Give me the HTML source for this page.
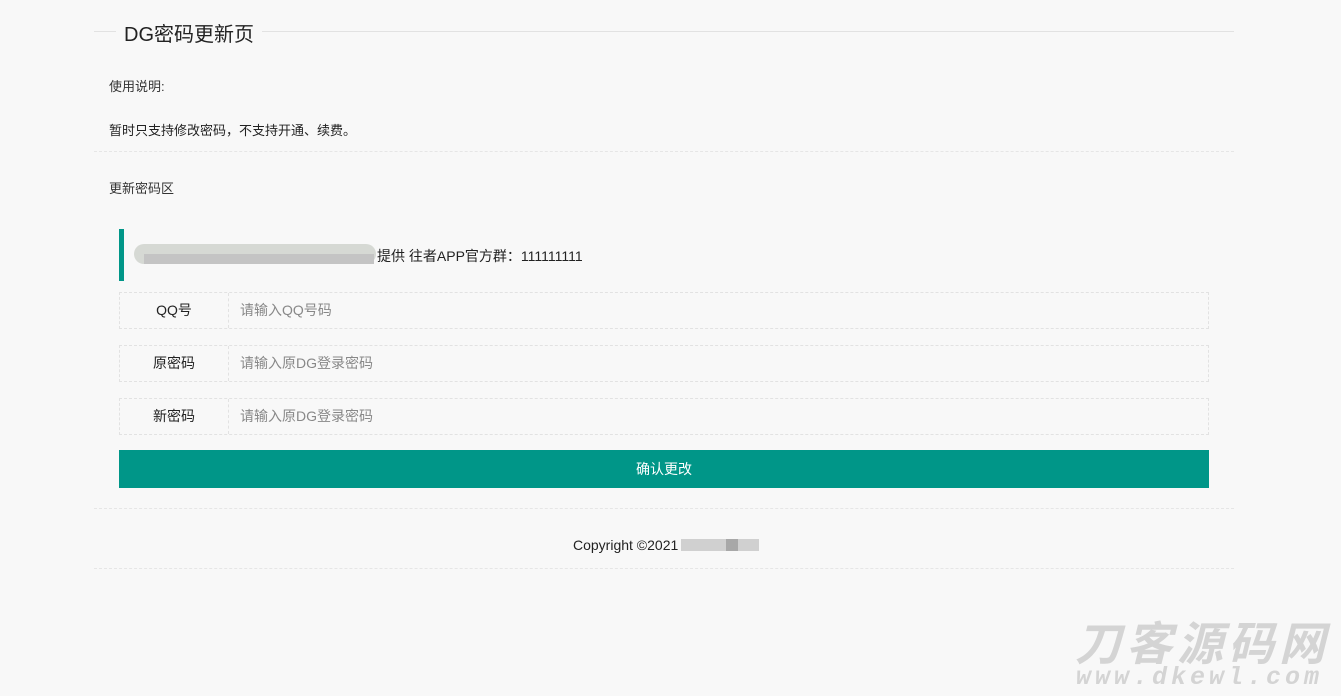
<!DOCTYPE html>
<html><head><meta charset="utf-8"><style>
body{margin:0;width:1341px;height:696px;background:#f8f8f8;font-family:"Liberation Sans","Noto Sans CJK SC",sans-serif;color:#333;position:relative;overflow:hidden}
.a{position:absolute}
.t{font-size:14px;white-space:nowrap}
.row{position:absolute;left:119px;width:1088px;height:35px;border:1px dashed #e2e2e2}
.row .l{position:absolute;left:0;top:0;width:108px;height:35px;line-height:35px;text-align:center;border-right:1px dashed #e2e2e2;font-size:14px;color:#222}
.row .p{position:absolute;left:120px;top:0;line-height:35px;font-size:14px;color:#888}
.dash{position:absolute;left:94px;width:1140px;border-top:1px dashed #e6e6e6;height:0}
</style></head><body>
<div class="a" style="left:94px;top:31px;width:22px;border-top:1px solid #e2e2e2"></div>
<div class="a" style="left:262px;top:31px;width:972px;border-top:1px solid #e2e2e2"></div>
<div class="a" style="left:124px;top:18px;font-size:20px;color:#222;white-space:nowrap">DG密码更新页</div>
<div class="a t" style="left:109px;top:76px;font-size:13px">使用说明:</div>
<div class="a t" style="left:109px;top:120px;font-size:13px;color:#222">暂时只支持修改密码，不支持开通、续费。</div>
<div class="dash" style="top:151px"></div>
<div class="a t" style="left:109px;top:178px;font-size:13px">更新密码区</div>
<div class="a" style="left:119px;top:229px;width:5px;height:52px;background:#009688"></div>
<div class="a" style="left:134px;top:244px;width:242px;height:20px;border-radius:10px;background:#d6d9d4"></div>
<div class="a" style="left:144px;top:254px;width:230px;height:10px;background:#c4c4c4"></div>
<div class="a t" style="left:377px;top:246px;font-size:14px;color:#222">提供 往者APP官方群：111111111</div>
<div class="row" style="top:292px"><div class="l">QQ号</div><div class="p">请输入QQ号码</div></div>
<div class="row" style="top:345px"><div class="l">原密码</div><div class="p">请输入原DG登录密码</div></div>
<div class="row" style="top:398px"><div class="l">新密码</div><div class="p">请输入原DG登录密码</div></div>
<div class="a" style="left:119px;top:450px;width:1090px;height:38px;background:#009688;color:#fff;font-size:14px;line-height:38px;text-align:center">确认更改</div>
<div class="dash" style="top:508px"></div>
<div class="a t" style="left:573px;top:537px;color:#222">Copyright ©2021</div>
<div class="a" style="left:681px;top:539px;width:78px;height:12px;background:#d0d0d0"></div>
<div class="a" style="left:726px;top:539px;width:12px;height:12px;background:#a8a8a8"></div>
<div class="dash" style="top:568px"></div>
<div class="a" style="left:1075px;top:619px;font-size:46px;font-weight:bold;font-style:italic;color:#d4d4d4;letter-spacing:5px;white-space:nowrap;line-height:50px">刀客源码网</div>
<div class="a" style="left:1076px;top:665px;font-size:25px;font-weight:bold;font-style:italic;color:#d4d4d4;letter-spacing:4px;white-space:nowrap;font-family:'Liberation Mono',monospace;line-height:26px">www.dkewl.com</div>
</body></html>
